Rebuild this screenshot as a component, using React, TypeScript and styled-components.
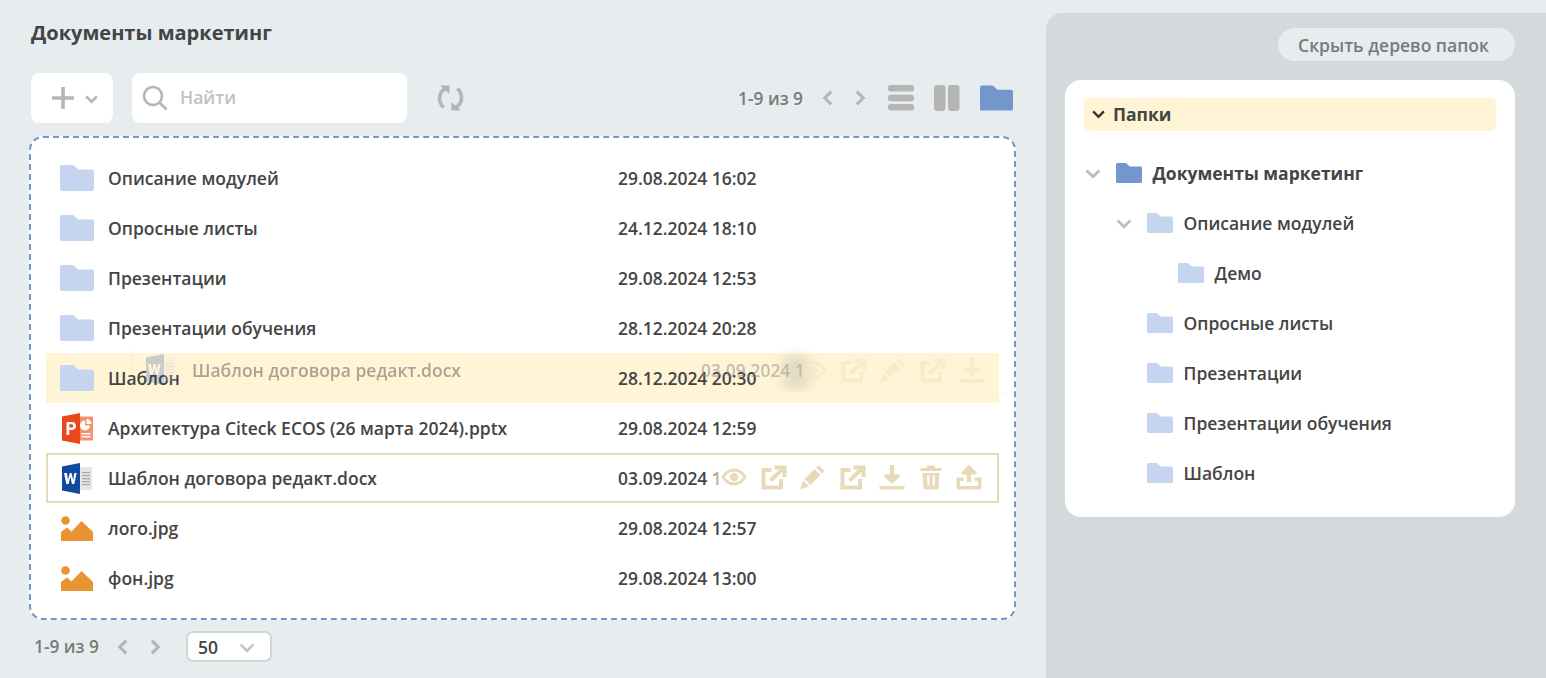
import styled, { createGlobalStyle } from 'styled-components';

const GlobalStyle = createGlobalStyle`
  html, body {
    margin: 0;
    padding: 0;
    height: 100%;
    overflow: hidden;
    background: #e7ecef;
    font-family: "Open Sans", "Noto Sans", sans-serif;
    color: #444;
  }
`;

type RowKind = 'folder' | 'ppt' | 'word' | 'image';

const rows: { name: string; date: string; kind: RowKind; state?: 'drop' | 'hover' }[] = [
  { name: 'Описание модулей', date: '29.08.2024 16:02', kind: 'folder' },
  { name: 'Опросные листы', date: '24.12.2024 18:10', kind: 'folder' },
  { name: 'Презентации', date: '29.08.2024 12:53', kind: 'folder' },
  { name: 'Презентации обучения', date: '28.12.2024 20:28', kind: 'folder' },
  { name: 'Шаблон', date: '28.12.2024 20:30', kind: 'folder', state: 'drop' },
  { name: 'Архитектура Citeck ECOS (26 марта 2024).pptx', date: '29.08.2024 12:59', kind: 'ppt' },
  { name: 'Шаблон договора редакт.docx', date: '03.09.2024 16:47', kind: 'word', state: 'hover' },
  { name: 'лого.jpg', date: '29.08.2024 12:57', kind: 'image' },
  { name: 'фон.jpg', date: '29.08.2024 13:00', kind: 'image' },
];

const tree = [
  { name: 'Документы маркетинг', level: 0, open: true, root: true },
  { name: 'Описание модулей', level: 1, open: true },
  { name: 'Демо', level: 2 },
  { name: 'Опросные листы', level: 1 },
  { name: 'Презентации', level: 1 },
  { name: 'Презентации обучения', level: 1 },
  { name: 'Шаблон', level: 1 },
];

// иконки
const FolderIcon = ({ color = '#c5d5f0', w = 34, h = 26 }: { color?: string; w?: number; h?: number }) => (
  <svg width={w} height={h} viewBox="0 0 34 26">
    <path
      d="M2 0h10c1 0 1.700.4 2.400 1.100L18 4.500h14c1.200 0 2 .8 2 2V24c0 1.200-.8 2-2 2H2c-1.200 0-2-.8-2-2V2C0 .8.8 0 2 0z"
      fill={color}
    />
  </svg>
);

const PptIcon = () => (
  <svg width="31" height="31" viewBox="0 0 31 31">
    <rect x="17" y="3.500" width="14" height="24" fill="#f98f6c" />
    <path d="M23 7.500a5 5 0 1 0 5 5h-5z" fill="#fff" />
    <path d="M24.500 6a5 5 0 0 1 5 5h-5z" fill="#fff" />
    <path d="M19.500 20h9v1.400h-9zM19.500 23h9v1.400h-9z" fill="#fff" />
    <path d="M0 3.500 18 0v31L0 27.500z" fill="#e9481b" />
    <path
      fillRule="evenodd"
      d="M4.500 9h5.300c2.700 0 4.200 1.500 4.200 3.900s-1.700 4-4.300 4H7.300V22H4.500zm2.800 2.300v3.300h2c1.200 0 1.900-.6 1.900-1.700s-.7-1.600-1.900-1.600z"
      fill="#fff"
    />
  </svg>
);

const WordIcon = () => (
  <svg width="30" height="31" viewBox="0 0 30 31">
    <rect x="15" y="4" width="15" height="23" fill="#e6e6e6" />
    <path d="M20 9h8v1.300h-8zM20 12h8v1.300h-8zM20 15h8v1.300h-8zM20 18h8v1.300h-8zM20 21h8v1.300h-8z" fill="#a8a8a8" />
    <path d="M0 3.500 18 0v31L0 27.500z" fill="#0f4a9e" />
    <path d="m2 10 2.300 11h2.300l1.700-7 1.700 7h2.300L14.600 10h-2.300l-1.100 7-1.700-7H7.700l-1.700 7-1.100-7z" fill="#fff" />
  </svg>
);

const ImageIcon = () => (
  <svg width="32" height="25" viewBox="0 0 32 25">
    <circle cx="4.500" cy="4.500" r="4.300" fill="#e99431" />
    <path d="M0 25v-9l6-4.500 4.500 4L20.500 5 32 16v9z" fill="#e99431" />
  </svg>
);

const FileIcon = ({ kind }: { kind: RowKind }) => {
  if (kind === 'ppt') return <PptIcon />;
  if (kind === 'word') return <WordIcon />;
  if (kind === 'image') return <ImageIcon />;
  return <FolderIcon />;
};

const Chevron = ({ dir = 'down', color = '#b5b5b5', size = 14, sw = 2.400 }: { dir?: 'down' | 'left' | 'right'; color?: string; size?: number; sw?: number }) => {
  const d = dir === 'down' ? 'M2 5l5 5 5-5' : dir === 'left' ? 'M9.500 2l-5 5 5 5' : 'M4.500 2l5 5-5 5';
  return (
    <svg width={size} height={size} viewBox="0 0 14 14" fill="none" stroke={color} strokeWidth={sw}>
      <path d={d} />
    </svg>
  );
};

const EyeIcon = () => (
  <svg width="26" height="26" viewBox="0 0 26 26">
    <path
      fillRule="evenodd"
      d="M13 4.500C7 4.500 2.500 9 .5 13c2 4 6.500 8.500 12.500 8.500S23.500 17 25.500 13C23.500 9 19 4.500 13 4.500zM13 7.500c-4.500 0-7.500 3-9.300 5.500 1.800 2.500 4.800 5.500 9.300 5.500s7.500-3 9.300-5.500C20.500 10.500 17.500 7.500 13 7.500zM13 8.800a4.200 4.200 0 1 1 0 8.400 4.200 4.200 0 0 1 0-8.400z"
      fill="#e6dab8"
    />
  </svg>
);

const ExternalIcon = () => (
  <svg width="26" height="26" viewBox="0 0 26 26" fill="none" stroke="#e6dab8" strokeWidth="4">
    <path d="M10.500 6H2.500v17.500H20V15" />
    <path d="M9.500 16.500 21.500 5" />
    <path d="M13.500 3.500h10v9.500" />
  </svg>
);

const EditIcon = () => (
  <svg width="26" height="26" viewBox="0 0 26 26">
    <path d="M18.500 1l6 6-2.500 2.500-6-6zM14.500 5l6 6-10 10-6-6zM3.300 16.500l5.700 5.700-9 3.300z" fill="#e6dab8" />
  </svg>
);

const DownloadIcon = () => (
  <svg width="26" height="26" viewBox="0 0 26 26">
    <path d="M10.800 1h4.400v9.500H20l1.500 1.500L13 20 4.500 12 6 10.500h4.800zM.5 22h25v3.500H.5z" fill="#e6dab8" />
  </svg>
);

const TrashIcon = () => (
  <svg width="24" height="26" viewBox="-1 0 24 26">
    <path
      fillRule="evenodd"
      d="M7 1.500h8V4h6.500v3H.5V4H7zM2.500 9h17l-1 15a2 2 0 0 1-2 1.500h-11a2 2 0 0 1-2-1.500zM7 11.500l.5 10h2l-.3-10zM12.800 11.500l-.3 10h2l.5-10z"
      fill="#e6dab8"
    />
  </svg>
);

const UploadIcon = () => (
  <svg width="26" height="26" viewBox="0 0 26 26">
    <path d="M13 .5l8 8.500-1.500 1.500h-4.300V18h-4.400v-7.500H6.500L5 9zM.5 13.500h7v3.500H4v5h18v-5h-3.500v-3.500h7v10a2 2 0 0 1-2 2h-21a2 2 0 0 1-2-2z" fill="#e6dab8" />
  </svg>
);

const App = () => {
  return (
    <Page>
      <GlobalStyle />
      <Main>
        <Title>Документы маркетинг</Title>
        <Toolbar>
          <AddButton>
            <svg width="22" height="22" viewBox="0 0 22 22">
              <path d="M9.200 0h3.600v9.200H22v3.600h-9.200V22H9.200v-9.200H0V9.200h9.200z" fill="#b5b5b5" />
            </svg>
            <Chevron size={15} />
          </AddButton>
          <SearchBox>
            <svg width="26" height="26" viewBox="0 0 26 26" fill="none" stroke="#b5b5b5" strokeWidth="2.600">
              <circle cx="11" cy="11" r="9" />
              <path d="M17.500 17.500 24.500 24.500" />
            </svg>
            <SearchHint>Найти</SearchHint>
          </SearchBox>
          <RefreshIcon width="27" height="26" viewBox="0 0 27 26" fill="none">
            <path d="M8 3.500C1.500 8 .5 16 6.500 22.500" stroke="#b5b5b5" strokeWidth="3.600" />
            <path d="M3 .5h9.500V9z" fill="#b5b5b5" />
            <path d="M19 22.500C25.500 18 26.500 10 20.500 3.500" stroke="#b5b5b5" strokeWidth="3.600" />
            <path d="M24 25.500h-9.500V17z" fill="#b5b5b5" />
          </RefreshIcon>
          <ToolbarRight>
            <PagerText>1-9 из 9</PagerText>
            <PagerArrows $offset={16}>
              <Chevron dir="left" size={18} />
              <Chevron dir="right" size={18} />
            </PagerArrows>
            <ViewIcons>
              <svg width="26" height="26" viewBox="0 0 26 26">
                <rect y="0" width="26" height="6.500" rx="2.500" fill="#b5b5b5" />
                <rect y="9.800" width="26" height="6.500" rx="2.500" fill="#b5b5b5" />
                <rect y="19" width="26" height="6.500" rx="2.500" fill="#b5b5b5" />
              </svg>
              <svg width="26" height="26" viewBox="0 0 26 26">
                <rect x="0" width="11.500" height="26" rx="3" fill="#b5b5b5" />
                <rect x="14" width="11.500" height="26" rx="3" fill="#b5b5b5" />
              </svg>
              <FolderIcon color="#7396cd" w={33} />
            </ViewIcons>
          </ToolbarRight>
        </Toolbar>

        <DropZone>
          {rows.map((row) => (
            <Row key={row.name} $state={row.state}>
              <IconCell>
                <FileIcon kind={row.kind} />
              </IconCell>
              <NameCell>{row.name}</NameCell>
              <DateCell>{row.date}</DateCell>
              {row.state === 'hover' && (
                <RowActions>
                  <EyeIcon />
                  <ExternalIcon />
                  <EditIcon />
                  <ExternalIcon />
                  <DownloadIcon />
                  <TrashIcon />
                  <UploadIcon />
                </RowActions>
              )}
            </Row>
          ))}
          <DragGhost>
            <GhostIcon>
              <WordIcon />
            </GhostIcon>
            <GhostName>Шаблон договора редакт.docx</GhostName>
            <GhostDate>03.09.2024 1</GhostDate>
            <GhostSmudge />
            <GhostActions>
              <EyeIcon />
              <ExternalIcon />
              <EditIcon />
              <ExternalIcon />
              <DownloadIcon />
            </GhostActions>
          </DragGhost>
        </DropZone>

        <Footer>
          <PagerText>1-9 из 9</PagerText>
          <PagerArrows $offset={15}>
            <Chevron dir="left" size={18} />
            <Chevron dir="right" size={18} />
          </PagerArrows>
          <PageSize>
            <span>50</span>
            <Chevron size={18} sw={2} color="#c4c4c4" />
          </PageSize>
        </Footer>
      </Main>

      <Aside>
        <HideButton>Скрыть дерево папок</HideButton>
        <TreePanel>
          <TreeHeader>
            <Chevron color="#333" size={15} sw={2.200} />
            Папки
          </TreeHeader>
          <TreeList>
            {tree.map((item) => (
              <TreeRow key={item.name} $level={item.level}>
                <TreeToggle>{item.open && <Chevron size={18} sw={2.200} color="#bdbdbd" />}</TreeToggle>
                <FolderIcon color={item.root ? '#7396cd' : '#c5d5f0'} w={26} h={20} />
                <TreeName $root={item.root}>{item.name}</TreeName>
              </TreeRow>
            ))}
          </TreeList>
        </TreePanel>
      </Aside>
    </Page>
  );
};

const Page = styled.div`
  display: flex;
  width: 1546px;
  height: 678px;
  overflow: hidden;
  background: #e7ecef;
`;

const Main = styled.main`
  width: 1046px;
  flex: none;
  box-sizing: border-box;
  padding: 19px 30px 0 29px;
`;

const Title = styled.h1`
  margin: 0 0 0 2px;
  height: 28px;
  line-height: 28px;
  font-size: 20px;
  font-weight: 700;
  color: #444;
`;

const Toolbar = styled.div`
  display: flex;
  align-items: center;
  height: 50px;
  margin: 26px 3px 13px 2px;
`;

const AddButton = styled.div`
  display: flex;
  align-items: center;
  justify-content: center;
  gap: 10px;
  width: 82px;
  height: 50px;
  padding-left: 6px;
  box-sizing: border-box;
  border-radius: 8px;
  background: #fff;
`;

const SearchBox = styled.div`
  display: flex;
  align-items: center;
  gap: 12px;
  width: 275px;
  height: 50px;
  margin-left: 19px;
  padding-left: 10px;
  box-sizing: border-box;
  border-radius: 8px;
  background: #fff;
`;

const SearchHint = styled.span`
  position: relative;
  top: -1px;
  font-size: 17.5px;
  font-weight: 600;
  color: #c2c2c2;
`;

const RefreshIcon = styled.svg`
  margin-left: 30px;
`;

const ToolbarRight = styled.div`
  display: flex;
  align-items: center;
  margin-left: auto;
`;

const PagerText = styled.span`
  font-size: 17.3px;
  font-weight: 600;
  color: #7a7a7a;
`;

const PagerArrows = styled.div<{ $offset: number }>`
  display: flex;
  align-items: center;
  gap: 14px;
  margin-left: ${(p) => p.$offset}px;
`;

const ViewIcons = styled.div`
  display: flex;
  align-items: center;
  gap: 20px;
  margin-left: 19px;
`;

const DropZone = styled.div`
  position: relative;
  box-sizing: border-box;
  width: 987px;
  height: 484px;
  padding: 15px 15px;
  border: 2px dashed #7396cd;
  border-radius: 14px;
  background: #fff;
`;

const Row = styled.div<{ $state?: 'drop' | 'hover' }>`
  position: relative;
  display: flex;
  align-items: center;
  box-sizing: border-box;
  width: 953px;
  height: 50px;
  background: ${(p) => (p.$state === 'drop' ? '#fff4d6' : 'transparent')};
  border: ${(p) => (p.$state === 'hover' ? '2px solid #e6dab8' : '2px solid transparent')};
`;

const IconCell = styled.div`
  display: flex;
  align-items: center;
  justify-content: center;
  width: 34px;
  margin-left: 12px;
  flex: none;
`;

const NameCell = styled.div`
  width: 510px;
  flex: none;
  margin-left: 14px;
  font-size: 17.5px;
  font-weight: 600;
  white-space: nowrap;
  color: #444;
`;

const DateCell = styled.div`
  font-size: 17.45px;
  font-weight: 600;
  white-space: nowrap;
  color: #444;
`;

const RowActions = styled.div`
  position: absolute;
  top: 9px;
  right: 15px;
  display: flex;
  align-items: center;
  gap: 13.5px;
  padding-left: 12px;
  background: linear-gradient(to right, rgba(255, 255, 255, 0), #fff 14px);
`;

const DragGhost = styled.div`
  position: absolute;
  left: 100px;
  top: 209px;
  display: flex;
  align-items: center;
  box-sizing: border-box;
  width: 890px;
  height: 46px;
  border: 1px solid rgba(200, 190, 160, 0.2);
  border-top: none;
  border-right: none;
  pointer-events: none;
  opacity: 0.5;
  overflow: hidden;
`;

const GhostIcon = styled.div`
  display: flex;
  margin-left: 14px;
  opacity: 0.45;
`;

const GhostName = styled.div`
  width: 509px;
  flex: none;
  margin-left: 16px;
  font-size: 17.5px;
  font-weight: 600;
  white-space: nowrap;
  color: #555;
`;

const GhostDate = styled.div`
  width: 104px;
  flex: none;
  font-size: 17.45px;
  font-weight: 600;
  white-space: nowrap;
  color: #888;
`;

const GhostSmudge = styled.div`
  position: absolute;
  left: 651px;
  top: 8px;
  width: 26px;
  height: 34px;
  background: rgba(120, 120, 120, 0.4);
  filter: blur(6px);
`;

const GhostActions = styled.div`
  display: flex;
  align-items: center;
  gap: 13.5px;
  opacity: 0.7;
  margin-left: -4px;
`;

const Footer = styled.div`
  display: flex;
  align-items: center;
  height: 31px;
  margin: 11px 0 0 5px;
`;

const PageSize = styled.div`
  display: flex;
  align-items: center;
  justify-content: space-between;
  box-sizing: border-box;
  width: 86px;
  height: 31px;
  margin-left: 22px;
  padding: 0 14px 0 10px;
  border: 2px solid #d4d4d4;
  border-radius: 7px;
  background: #fff;
  font-size: 17.5px;
  font-weight: 600;
  color: #444;
`;

const Aside = styled.aside`
  flex: 1;
  display: flex;
  flex-direction: column;
  align-items: flex-end;
  box-sizing: border-box;
  margin-top: 13px;
  padding: 15px 31px 0 19px;
  border-top-left-radius: 16px;
  background: #d4dadc;
`;

const HideButton = styled.div`
  display: flex;
  align-items: center;
  justify-content: center;
  box-sizing: border-box;
  width: 237px;
  height: 33px;
  padding-right: 6px;
  border-radius: 17px;
  background: #e7ecef;
  font-size: 17.5px;
  font-weight: 600;
  color: #7a7a7a;
`;

const TreePanel = styled.div`
  box-sizing: border-box;
  width: 450px;
  height: 437px;
  margin-top: 19px;
  padding: 18px 19px;
  border-radius: 16px;
  background: #fff;
`;

const TreeHeader = styled.div`
  display: flex;
  align-items: center;
  gap: 7px;
  height: 33px;
  padding: 0 0 2px 7px;
  box-sizing: border-box;
  border-radius: 5px;
  background: #fff4d6;
  font-size: 17.5px;
  font-weight: 700;
  color: #444;
`;

const TreeList = styled.div`
  margin-top: 17px;
`;

const TreeRow = styled.div<{ $level: number }>`
  display: flex;
  align-items: center;
  height: 50px;
  padding-left: ${(p) => p.$level * 31}px;
`;

const TreeToggle = styled.div`
  display: flex;
  align-items: center;
  justify-content: flex-start;
  width: 32px;
  flex: none;
`;

const TreeName = styled.span<{ $root?: boolean }>`
  margin-left: 10.5px;
  font-size: 17.5px;
  font-weight: ${(p) => (p.$root ? 700 : 600)};
  white-space: nowrap;
  color: #444;
`;

export default App;
